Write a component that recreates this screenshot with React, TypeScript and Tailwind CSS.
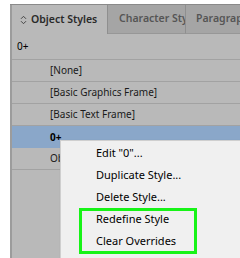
import React from 'react';

const font = { fontFamily: '"Noto Sans", "Open Sans", sans-serif' };

function SortIcon() {
  return (
    <svg width="7" height="10" viewBox="0 0 7 10" className="mr-[4px] shrink-0">
      <path d="M1 3.8 L3.5 1.3 L6 3.8" fill="none" stroke="#444" strokeWidth="1" />
      <path d="M1 6.2 L3.5 8.7 L6 6.2" fill="none" stroke="#444" strokeWidth="1" />
    </svg>
  );
}

const rows = ['[None]', '[Basic Graphics Frame]', '[Basic Text Frame]'];
const menuItems = ['Edit "0"...', 'Duplicate Style...', 'Delete Style...'];

export default function App() {
  return (
    <div className="relative w-[240px] h-[258px] bg-white overflow-hidden flex" style={font}>
      <div className="w-[10px] shrink-0" />
      <div className="flex-1 flex flex-col pt-[4px]">
        <div className="h-[1px] bg-[#8a8a8a]" />
        {/* tabs */}
        <div className="flex h-[29px] text-[10.5px] font-semibold bg-[#a5a5a5] border-l-2 border-[#9c9c9c]">
          <div className="w-[96px] flex items-center pl-[8px] bg-[#b9b9b9] border-r border-[#8f8f8f] text-[#2a2a2a]">
            <SortIcon />
            Object Styles
          </div>
          <div className="w-[78px] flex items-center pl-[11px] border-b border-[#979797] border-r border-r-[#8f8f8f] text-[#555] whitespace-nowrap overflow-hidden">
            Character Sty
          </div>
          <div className="flex-1 flex items-center pl-[10px] border-b border-[#979797] text-[#555] whitespace-nowrap overflow-hidden">
            Paragrap
          </div>
        </div>
        {/* body */}
        <div className="flex-1 bg-[#b9b9b9] border-l-2 border-[#9c9c9c] text-[10px] text-[#1a1a1a]">
          <div className="h-[26px] flex items-center pl-[5px] text-black border-b border-[#a2a2a2]">0+</div>
          {rows.map((r) => (
            <div key={r} className="h-[22px] flex items-center pl-[38px] border-b border-[#a2a2a2]">
              {r}
            </div>
          ))}
          <div className="h-[22px] flex items-center pl-[38px] bg-[#8aa7c9] font-bold text-black">0+</div>
          <div className="h-[22px] flex items-center pl-[38px] border-b border-[#a2a2a2]">Object</div>
        </div>
      </div>

      {/* context menu */}
      <div className="absolute left-[60px] top-[140px] w-[200px] h-[140px] bg-[#f0f0f0] border border-[#cfcfcf] pt-[1px] text-[11px] text-black shadow-[1px_1px_2px_rgba(0,0,0,0.2)]">
        {menuItems.map((m) => (
          <div key={m} className="h-[22px] flex items-center pl-[35px]">
            {m}
          </div>
        ))}
        <div className="h-[22px] flex items-center pl-[35px]">Redefine Style</div>
        <div className="h-[22px] flex items-center pl-[35px]">Clear Overrides</div>
      </div>

      {/* highlight box */}
      <div className="absolute left-[79px] top-[208px] w-[118px] h-[46px] border-[3px] border-[#17f317]" />
    </div>
  );
}
